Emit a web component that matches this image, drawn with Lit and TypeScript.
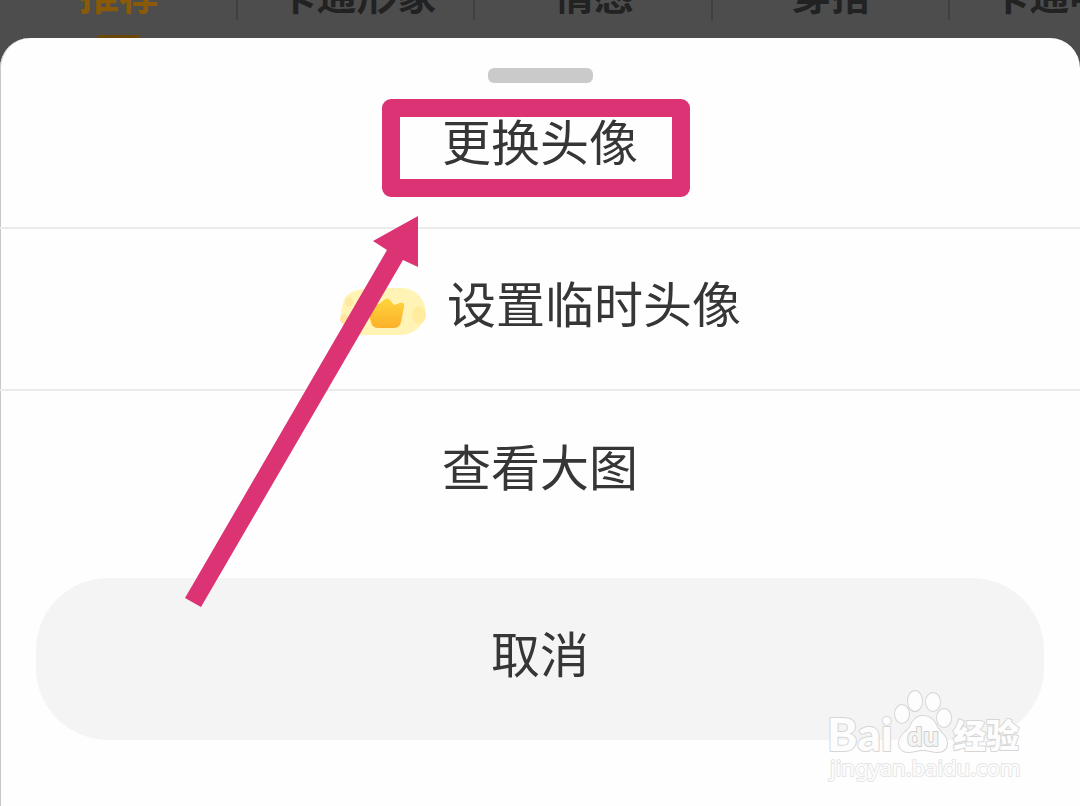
import { LitElement, html, css } from "lit";
import { customElement, state } from "lit/decorators.js";

@customElement("crown-badge")
class CrownBadge extends LitElement {
  static styles = css`
    :host { display: block; width: 88px; height: 50px; }
    svg { display: block; width: 100%; height: 100%; }
  `;
  render() {
    return html`<svg viewBox="0 0 88 50" aria-hidden="true">
      <defs>
        <linearGradient id="gold" x1="0" y1="0" x2="0" y2="1">
          <stop offset="0" stop-color="#ffd53d" />
          <stop offset="1" stop-color="#fbb02a" />
        </linearGradient>
      </defs>
      <path fill="#fff4b5" d="M24 3Q30 6 38 4Q44 1 52 2H62C74 2 82 9 85 18C88 26 86 35 80 41C75 47 68 49 60 49H24C12 49 5 42 3 34C0 26 4 19 5 14C8 7 16 4 24 3Z" />
      <ellipse cx="10" cy="16" rx="4" ry="5" fill="#ffe9a0" />
      <ellipse cx="5" cy="33" rx="4" ry="5" fill="#ffe5a0" />
      <ellipse cx="80" cy="29" rx="7" ry="9" fill="#ffec9f" />
      <path fill="url(#gold)" d="M28 20Q29 16 33 17L40 18L45 14Q48 11 51 14L55 19L61 17Q66 16 65 21L62 36Q61 42 54 42H40Q33 42 32 36Z" />
    </svg>`;
  }
}

@customElement("watermark-logo")
class WatermarkLogo extends LitElement {
  static styles = css`
    :host { display: block; width: 204px; height: 100px; }
    svg { display: block; width: 100%; height: 100%; overflow: visible; }
    .mark { fill: #fdfdfd; stroke: #d6d6d6; stroke-width: 2px; paint-order: stroke; stroke-linejoin: round; }
    .latin { font: 900 46px Lato, "Liberation Sans", sans-serif; }
    .small { font: 700 25px "Open Sans", sans-serif; fill: #f4f4f4; stroke: #cecece; }
    .cjk { font: 900 33px "Noto Sans CJK SC", sans-serif; }
    .url { font: 400 22px "Noto Sans", "Open Sans", sans-serif; stroke: #e6e6e6; }
  `;
  render() {
    return html`<svg viewBox="0 0 204 100" role="img" aria-label="Baidu">
      <text class="mark latin" x="2" y="65">Bai</text>
      <g class="mark">
        <ellipse cx="77" cy="28" rx="7" ry="9" />
        <ellipse cx="90" cy="15" rx="7" ry="10" />
        <ellipse cx="108" cy="16" rx="7" ry="9" />
        <ellipse cx="119" cy="32" rx="7" ry="9" />
        <path d="M98 30C105 30 109 34 112 41C115 46 122 50 122 57C122 63 118 66 112 66C107 66 104 64 98 64C92 64 89 66 83 66C77 66 74 62 74 57C74 50 81 46 85 41C88 34 91 30 98 30Z" />
      </g>
      <text class="mark small" x="82" y="60">du</text>
      <text class="mark cjk" x="128" y="62">经验</text>
      <text class="mark url" x="5" y="90">jingyan.baidu.com</text>
    </svg>`;
  }
}

@customElement("app-root")
class AppRoot extends LitElement {
  @state() private selected = 0;

  private tabs = ["推荐", "卡通形象", "情感", "穿搭", "卡通明星"];

  static styles = css`
    :host {
      display: flex;
      flex-direction: column;
      position: relative;
      min-height: 100vh;
      overflow: hidden;
      background: #4d4d4d;
      color: #363636;
      font-family: "Noto Sans CJK SC", sans-serif;
    }
    button { border: 0; padding: 0; background: none; color: inherit; font: inherit; cursor: pointer; }
    .tabs {
      display: grid;
      grid-template-columns: repeat(5, 22%);
      grid-template-rows: 38px;
      align-items: end;
    }
    .tab {
      display: flex;
      flex-direction: column;
      align-items: center;
      justify-content: flex-end;
      gap: 18px;
      height: 69px;
      font-size: 40px;
      line-height: 48px;
      font-weight: 700;
      white-space: nowrap;
      color: #222;
      background: linear-gradient(#404040, #404040) right 0 top 0 / 2px 51px no-repeat;
    }
    .tab::after { content: ""; width: 42px; height: 3px; }
    .tab.on { color: #8a5a08; }
    .tab.on::after { background: #6b4808; }
    .sheet {
      flex: 1;
      display: flex;
      flex-direction: column;
      background: #fefefe;
      border-radius: 30px 30px 0 0;
      box-shadow: inset 1px 0 #c8c8c8;
      padding-top: 30px;
    }
    .handle { align-self: center; width: 105px; height: 15px; border-radius: 6px; background: #cacaca; }
    .option {
      display: flex;
      align-items: center;
      justify-content: center;
      gap: 20px;
      height: 162px;
      padding-bottom: 14px;
      font-size: 49px;
      line-height: 72px;
      border-bottom: 2px solid #ebebeb;
    }
    .option.first { height: 146px; padding-bottom: 30px; }
    .option.last { border: 0; }
    .option crown-badge { margin-top: 18px; }
    .cancel {
      height: 162px;
      margin: 25px 36px 0;
      padding-bottom: 14px;
      border-radius: 72px;
      background: #f4f4f4;
      font-size: 49px;
      line-height: 72px;
    }
    .frame {
      position: absolute;
      left: 382px;
      top: 99px;
      width: 272px;
      height: 62px;
      border: 18px solid #dc3375;
      border-radius: 9px;
      pointer-events: none;
    }
    .arrow { position: absolute; left: 180px; top: 210px; width: 250px; height: 400px; pointer-events: none; }
    .mark { position: absolute; right: 51px; bottom: 20px; pointer-events: none; }
  `;

  render() {
    return html`
      <nav class="tabs">
        ${this.tabs.map((t, i) => html`<button class="tab ${i === this.selected ? "on" : ""}" @click=${() => (this.selected = i)}>${t}</button>`)}
      </nav>
      <main class="sheet">
        <div class="handle"></div>
        <button class="option first">更换头像</button>
        <button class="option"><crown-badge></crown-badge>设置临时头像</button>
        <button class="option last">查看大图</button>
        <button class="cancel">取消</button>
      </main>
      <div class="frame"></div>
      <svg class="arrow" viewBox="180 210 250 400" aria-hidden="true">
        <path fill="#dc3375" d="M418 216V267L403 260L201 607L185 598L387 250L373 241Z" />
      </svg>
      <watermark-logo class="mark"></watermark-logo>
    `;
  }
}
